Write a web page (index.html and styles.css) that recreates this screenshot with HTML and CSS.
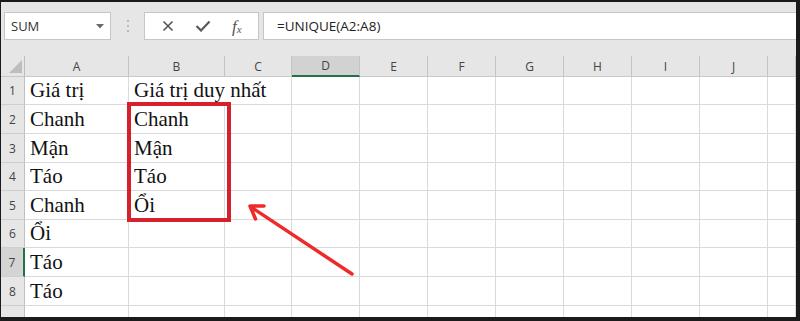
FILE: index.html
```html
<!DOCTYPE html>
<html lang="vi">
<head>
  <meta charset="UTF-8">
  <meta name="viewport" content="width=device-width, initial-scale=1.0">
  <title>UNIQUE</title>
  <link rel="stylesheet" href="styles.css">
</head>
<body>
  <div class="frame">
    <!-- Thanh công thức -->
    <div class="fbar">
      <div class="namebox">
        <span>SUM</span>
        <svg class="caret" width="8" height="5" viewBox="0 0 8 5"><path d="M0 0H8L4 4.5Z" fill="#6a6a6a"/></svg>
      </div>
      <div class="grip"><i></i><i></i><i></i></div>
      <div class="btns">
        <svg width="12" height="12" viewBox="0 0 12 12"><path d="M1.5 1.5L10.5 10.5M10.5 1.5L1.5 10.5" stroke="#5a5a5a" stroke-width="1.7" fill="none"/></svg>
        <svg width="16" height="12" viewBox="0 0 16 12"><path d="M1.5 6L6 10.5L14.5 1.5" stroke="#5a5a5a" stroke-width="2.2" fill="none"/></svg>
        <span class="fx"><i>f</i><sub>x</sub></span>
      </div>
      <div class="formula">=UNIQUE(A2:A8)</div>
    </div>

    <!-- Bảng tính -->
    <div class="sheet">
      <div class="row hdr">
        <div class="corner"><svg width="13" height="13" viewBox="0 0 13 13"><path d="M13 0V13H0Z" fill="#bdbdbd"/></svg></div>
        <div class="ch">A</div><div class="ch">B</div><div class="ch">C</div>
        <div class="ch sel">D</div><div class="ch">E</div><div class="ch">F</div>
        <div class="ch">G</div><div class="ch">H</div><div class="ch">I</div>
        <div class="ch">J</div><div class="ch"></div>
      </div>
      <div class="row r28">
        <div class="rh">1</div><div class="c">Giá trị</div><div class="c span2">Giá trị duy nhất</div>
        <div class="c"></div><div class="c"></div><div class="c"></div><div class="c"></div><div class="c"></div><div class="c"></div><div class="c"></div><div class="c"></div>
      </div>
      <div class="row r29">
        <div class="rh">2</div><div class="c">Chanh</div><div class="c">Chanh</div><div class="c"></div>
        <div class="c"></div><div class="c"></div><div class="c"></div><div class="c"></div><div class="c"></div><div class="c"></div><div class="c"></div><div class="c"></div>
      </div>
      <div class="row r29">
        <div class="rh">3</div><div class="c">Mận</div><div class="c">Mận</div><div class="c"></div>
        <div class="c"></div><div class="c"></div><div class="c"></div><div class="c"></div><div class="c"></div><div class="c"></div><div class="c"></div><div class="c"></div>
      </div>
      <div class="row r28">
        <div class="rh">4</div><div class="c">Táo</div><div class="c">Táo</div><div class="c"></div>
        <div class="c"></div><div class="c"></div><div class="c"></div><div class="c"></div><div class="c"></div><div class="c"></div><div class="c"></div><div class="c"></div>
      </div>
      <div class="row r29">
        <div class="rh">5</div><div class="c">Chanh</div><div class="c">Ổi</div><div class="c"></div>
        <div class="c"></div><div class="c"></div><div class="c"></div><div class="c"></div><div class="c"></div><div class="c"></div><div class="c"></div><div class="c"></div>
      </div>
      <div class="row r28">
        <div class="rh">6</div><div class="c">Ổi</div><div class="c"></div><div class="c"></div>
        <div class="c"></div><div class="c"></div><div class="c"></div><div class="c"></div><div class="c"></div><div class="c"></div><div class="c"></div><div class="c"></div>
      </div>
      <div class="row r29">
        <div class="rh active">7</div><div class="c">Táo</div><div class="c"></div><div class="c"></div>
        <div class="c"></div><div class="c"></div><div class="c"></div><div class="c"></div><div class="c"></div><div class="c"></div><div class="c"></div><div class="c"></div>
      </div>
      <div class="row r29">
        <div class="rh">8</div><div class="c">Táo</div><div class="c"></div><div class="c"></div>
        <div class="c"></div><div class="c"></div><div class="c"></div><div class="c"></div><div class="c"></div><div class="c"></div><div class="c"></div><div class="c"></div>
      </div>
      <div class="row r28">
        <div class="rh"></div><div class="c"></div><div class="c"></div><div class="c"></div>
        <div class="c"></div><div class="c"></div><div class="c"></div><div class="c"></div><div class="c"></div><div class="c"></div><div class="c"></div><div class="c"></div>
      </div>
    </div>

    <!-- Khung đỏ và mũi tên -->
    <div class="mark"></div>
    <svg class="arrow" width="130" height="90" viewBox="240 195 130 90">
      <path d="M352 274L251 207M250 206L255.5 219M250 206L264 206" stroke="#ee2b2b" stroke-width="3.5" stroke-linecap="round" fill="none"/>
    </svg>
  </div>
</body>
</html>
```

FILE: styles.css
```css
/* Загальні стилі */
html, body {
  margin: 0;
  padding: 0;
}

/* Темна рамка навколо знімка */
.frame {
  position: relative;
  width: 800px;
  height: 321px;
  box-sizing: border-box;
  border-style: solid;
  border-color: #1b1b1b;
  border-width: 2px 4px 4px 1px;
  background-color: #e6e6e6;
  overflow: hidden;
  font-family: "Open Sans", "Noto Sans", sans-serif;
}

/* Thanh công thức */
.fbar {
  display: flex;
  height: 28px;
  padding: 10px 0 0 3px;
  margin-bottom: 16px;
}

.namebox {
  width: 107px;
  box-sizing: border-box;
  border: 1px solid #c6c6c6;
  background-color: #fff;
  display: flex;
  align-items: center;
  justify-content: space-between;
  padding: 0 6px 0 6px;
  font-size: 13px;
  color: #333;
}

.grip {
  width: 33px;
  display: flex;
  flex-direction: column;
  align-items: center;
  justify-content: center;
  gap: 3px;
}

.grip i {
  width: 2px;
  height: 2px;
  background-color: #b8b8b8;
}

.btns {
  width: 115px;
  box-sizing: border-box;
  border: 1px solid #c6c6c6;
  background-color: #fff;
  display: flex;
  align-items: center;
  gap: 21px;
  padding-left: 17px;
}

.fx {
  font-family: "Liberation Serif", serif;
  font-size: 17px;
  color: #555;
  line-height: 1;
}

.fx sub {
  font-size: 11px;
  font-style: italic;
  vertical-align: -1px;
}

.formula {
  flex: 1;
  margin-left: 4px;
  box-sizing: border-box;
  border: 1px solid #c6c6c6;
  border-right: none;
  background-color: #fff;
  display: flex;
  align-items: center;
  padding-left: 13px;
  font-size: 13.5px;
  color: #222;
}

/* Bảng tính */
.sheet {
  background-color: #fff;
}

.row {
  display: grid;
  grid-template-columns: 24px 104px 96px 67px repeat(7, 68px) 28px;
}

.r28 { height: 28px; }
.r29 { height: 29px; }

.hdr {
  height: 21px;
  background-color: #e6e6e6;
}

.corner {
  border-right: 1px solid #bdbdbd;
  border-bottom: 1px solid #c8c8c8;
  display: flex;
  align-items: flex-end;
  justify-content: flex-end;
  padding: 0 2px 3px 0;
}

.ch {
  border-right: 1px solid #c4c4c4;
  border-bottom: 1px solid #c8c8c8;
  display: flex;
  align-items: center;
  justify-content: center;
  font-size: 12px;
  color: #444;
}

.ch.sel {
  background-color: #d2d2d2;
  border-bottom: 2px solid #217346;
}

.rh {
  background-color: #e6e6e6;
  border-right: 1px solid #c0c0c0;
  border-bottom: 1px solid #cfcfcf;
  display: flex;
  align-items: flex-end;
  justify-content: center;
  padding-bottom: 5px;
  font-size: 12px;
  color: #444;
}

.rh.active {
  background-color: #d4d4d4;
  border-right: 2px solid #217346;
}

.c {
  border-right: 1px solid #dadada;
  border-bottom: 1px solid #dadada;
  display: flex;
  align-items: flex-end;
  padding: 0 0 2px 5px;
  font-family: "Liberation Serif", "Times New Roman", serif;
  font-size: 21px;
  line-height: 24px;
  color: #111;
  white-space: nowrap;
}

.span2 {
  grid-column: span 2;
}

.row > *, .hdr > * {
  box-sizing: border-box;
}

/* Khung đỏ */
.mark {
  position: absolute;
  left: 126px;
  top: 100px;
  width: 104px;
  height: 120px;
  box-sizing: border-box;
  border: 4px solid #d6202c;
}

/* Mũi tên */
.arrow {
  position: absolute;
  left: 239px;
  top: 193px;
}
```
